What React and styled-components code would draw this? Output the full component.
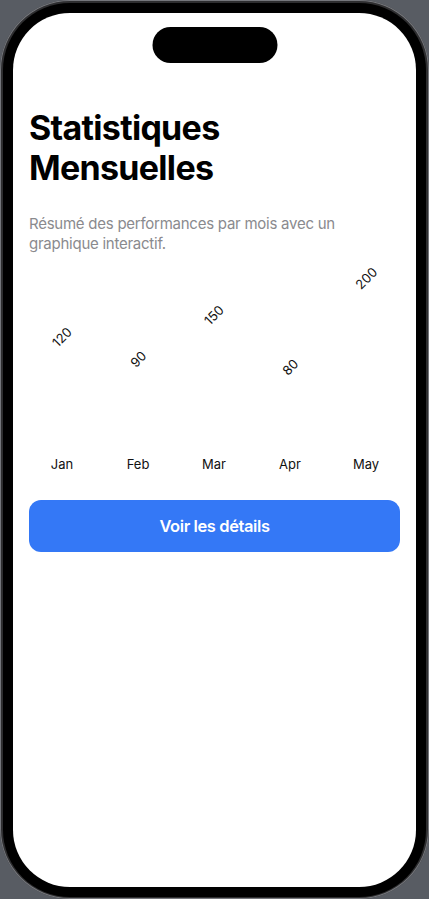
import styled, { createGlobalStyle } from 'styled-components';

const Global = createGlobalStyle`
  html, body {
    margin: 0;
    padding: 0;
    background: #585c63;
  }
  * { box-sizing: border-box; }
`;

const Device = styled.div`
  width: 429px;
  height: 899px;
  padding: 3px 3px 2px;
  border-radius: 70px;
  background: #2e2e30;
  box-shadow: inset 0 0 0 1px #75777c;
  display: flex;
`;

const Bezel = styled.div`
  flex: 1;
  display: flex;
  padding: 10px;
  border-radius: 67px;
  background: #000;
`;

const Screen = styled.div`
  position: relative;
  flex: 1;
  background: #fff;
  border-radius: 57px;
  overflow: hidden;
  padding: 95px 16px 0;
  font-family: Inter, "Liberation Sans", sans-serif;
`;

const Island = styled.div`
  position: absolute;
  top: 14px;
  left: 50%;
  transform: translateX(-50%);
  width: 125px;
  height: 36px;
  border-radius: 18px;
  background: #000;
`;

const Title = styled.h1`
  margin: 0;
  font-size: 34px;
  line-height: 40px;
  font-weight: 700;
  letter-spacing: -0.7px;
  color: #000;
`;

const Subtitle = styled.p`
  margin: 26px 0 0;
  font-size: 15px;
  line-height: 20px;
  color: #8a8a8e;
  letter-spacing: -0.25px;
`;

const Chart = styled.div`
  display: grid;
  grid-template-columns: repeat(5, 76px);
  align-items: end;
  margin: 16px -5px 0;
`;

const Column = styled.div`
  display: flex;
  flex-direction: column;
  align-items: center;
`;

const Value = styled.span`
  display: block;
  height: 16px;
  line-height: 16px;
  font-size: 13px;
  color: #111;
  transform: rotate(-45deg);
`;

const Bar = styled.div`
  width: 100%;
  height: ${p => p.$h}px;
`;

const Month = styled.span`
  margin-top: 22px;
  height: 16px;
  line-height: 16px;
  font-size: 13px;
  color: #111;
`;

const Button = styled.button`
  display: block;
  width: 100%;
  height: 52px;
  margin-top: 28px;
  border: none;
  border-radius: 12px;
  background: #3478f6;
  color: #fff;
  font-family: inherit;
  font-size: 16.5px;
  font-weight: 600;
  letter-spacing: -0.4px;
`;

const data = [
  { month: 'Jan', value: 120 },
  { month: 'Feb', value: 90 },
  { month: 'Mar', value: 150 },
  { month: 'Apr', value: 80 },
  { month: 'May', value: 200 },
];

export default function App() {
  return (
    <>
      <Global />
      <Device>
        <Bezel>
          <Screen>
            <Island />
            <Title>Statistiques<br />Mensuelles</Title>
            <Subtitle>Résumé des performances par mois avec un graphique interactif.</Subtitle>
            <Chart>
              {data.map(d => (
                <Column key={d.month}>
                  <Value>{d.value}</Value>
                  <Bar $h={Math.round(d.value * 0.742)} />
                  <Month>{d.month}</Month>
                </Column>
              ))}
            </Chart>
            <Button>Voir les détails</Button>
          </Screen>
        </Bezel>
      </Device>
    </>
  );
}
